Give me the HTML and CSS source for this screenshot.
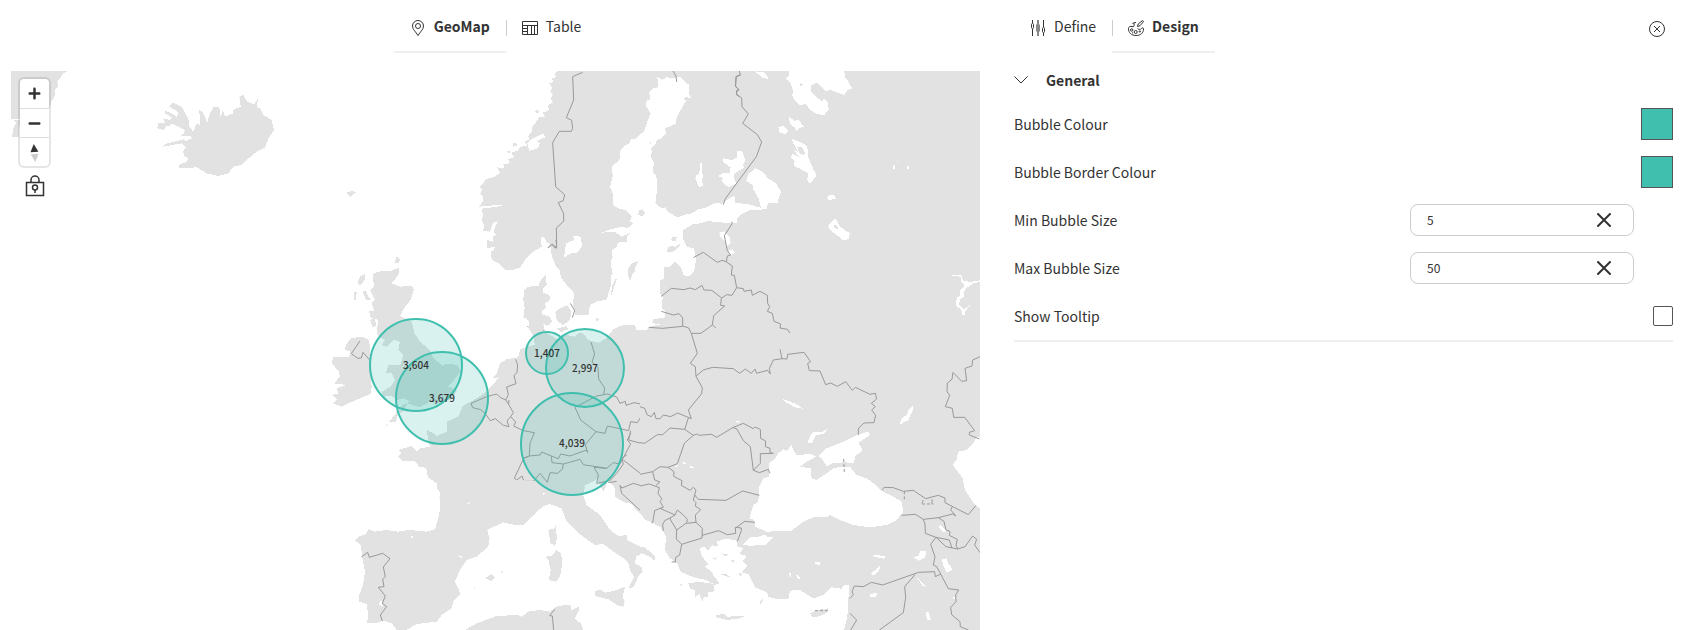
FILE: index.html
```html
<!DOCTYPE html>
<html lang="en">
<head>
<meta charset="utf-8">
<title>GeoMap design</title>
<link rel="stylesheet" href="styles.css">
</head>
<body>
<div class="app">
  <main class="view">
    <nav class="tabs tabs-center">
      <button class="tab active" type="button">
        <svg class="icon" viewBox="0 0 16 16"><path d="M8 15.5C6 12 2.500 9.500 2.500 6a5.500 5.500 0 0 1 11 0c0 3.500-3.500 6-5.500 9.500z"/><circle cx="8" cy="6" r="2.500"/></svg>
        GeoMap</button>
      <button class="tab" type="button">
        <svg class="icon" viewBox="0 0 16 16"><path d="M.5 1.500h15v13H.5zM.5 5.500h15M5.500 5.500v9M9.500 5.500v9M12.500 5.500v9M.5 8.500h5M.5 11.500h5"/></svg>
        Table</button>
    </nav>
    <div class="map">
      <svg class="map-canvas" viewBox="11 71 969 559" preserveAspectRatio="xMinYMin slice" role="img" aria-label="Map of Europe with bubbles">
        <!-- Iceland and Greenland -->
        <g transform="translate(0 60) scale(.33333)">
          <path class="land" d="M537 325V315L560 305 565 295 555 290 548 275 558 262 545 250 490 260 495 252 550 238 557 243 575 236 573 228 540 228 550 222 555 210 535 200 515 190 510 198 500 198 490 210 472 205 475 190 495 190 490 175 510 180 515 172 495 160 495 152 515 160 530 170 535 160 525 150 508 140 520 128 545 140 555 160 565 175 568 200 580 215 590 190 600 195 598 150 608 155 622 188 630 160 640 142 658 142 662 172 668 150 675 170 700 160 698 150 722 140 718 110 730 105 742 125 762 133 775 115 770 140 780 145 790 165 815 180 822 210 805 235 795 262 770 275 740 300 725 315 700 320 685 340 655 348 620 340 590 322Z"/>
          <path class="land" d="M33 33H205L190 40 182 52 172 66 174 78 164 92 166 105 154 125 150 142 60 178H33ZM60 180 56 230 36 232 40 205 48 188 40 180Z"/>
        </g>
        <!-- Scandinavia, the Baltics and Russia -->
        <g transform="translate(440 60) scale(.33333)">
          <path class="land" d="M352 33 344 42 348 52 336 56 340 66 328 70 336 84 330 95 338 104 332 118 340 128 322 135 328 150 308 158 314 170 298 172 285 190 278 200 275 215 265 228 268 238 255 245 262 258 240 260 235 272 214 278 222 292 204 298 210 310 190 312 192 325 172 322 180 338 165 350 140 357 120 380 126 390 120 402 130 412 128 425 118 440 186 434 186 438 127 446 128 470 124 480 132 495 130 512 150 515 158 490 175 482 165 500 162 515 168 525 158 530 158 545 142 540 140 565 165 560 160 572 153 574 155 600 180 612 195 630 218 630 240 622 255 600 280 575 305 560 303 535 312 530 318 545 330 552 336 590 348 620 360 630 362 650 378 672 400 695 403 712 398 725 405 765 445 765 450 735 470 725 500 718 512 680 512 650 518 640 512 610 518 590 515 570 530 562 534 548 560 545 560 530 572 518 545 530 525 515 485 518 510 508 530 504 545 500 562 505 580 490 570 484 575 470 555 450 535 445 518 435 518 400 510 380 518 350 516 320 538 300 542 270 550 260 570 248 572 238 590 235 602 222 612 215 620 190 632 160 618 138 620 122 630 118 628 95 640 85 655 82 652 52 668 60 680 52 702 55 720 50 732 62 748 75 746 102 755 115 735 110 732 118 738 122 725 145 710 172 708 190 690 200 675 205 678 220 665 235 650 240 648 252 632 265 636 275 632 290 642 310 638 335 646 345 652 362 650 398 646 430 665 445 678 442 680 452 695 462 712 472 735 464 755 460 775 448 800 442 828 428 845 432 860 420 883 407 886 428 930 434 978 448 930 450 905 462 893 472 890 490 850 488 800 483 785 490 760 492 730 510 728 535 740 560 762 565 768 600 762 635 745 650 730 645 722 620 705 605 690 620 672 620 672 655 660 662 660 700 668 712 665 745 675 752 675 772 640 778 636 790 668 792 630 800 620 810 590 812 585 795 550 794 520 808 500 835 560 1100H1620V33Z"/>
          <path class="land" d="M595 462 598 450 608 448 616 460 606 468 596 466ZM680 575 684 562 700 556 705 562 720 550 722 556 706 572 690 578ZM694 538 698 530 710 532 708 542 698 544ZM565 650 563 628 575 610 594 603 583 620 584 635 574 648 572 660ZM514 706 515 680 528 653 530 660 520 690ZM632 245 636 250 628 252ZM466 777 472 774 478 780 470 783ZM284 154 292 150 300 156 290 160ZM218 250 228 248 232 256 220 260ZM200 275 212 272 210 280ZM352 770 350 750 380 735 392 750 388 775 370 790ZM302 785 308 766 330 770 336 785 320 798ZM350 806 380 798 384 806 365 816Z"/>
          <path class="sea" d="M372 592 378 550 402 540 400 528 424 530 425 560 410 580 398 578ZM766 356 768 345 778 342 780 308 786 308 784 340 790 345 784 355 790 378 776 380ZM262 250 275 238 310 220 315 232 300 238 290 245 300 248 294 265 268 272Z"/>
          <path class="border" d="M428 37 398 50 401 120 379 173 395 181 398 205 394 214 358 214 338 248 347 380 374 404 370 422 355 428 371 461 371 484 349 504 350 564 337 552 325 564M699 33 708 48 710 66M900 45 888 50 887 80 897 90 890 95 890 105 900 110M391 730 404 752 397 773M262 799 271 808 314 811M664 709 694 685 732 689 750 684 766 689 786 676 792 690 815 691 845 714M760 593 790 577 832 607 846 601 858 605M664 754 700 765 717 761 728 774 728 799 668 805 626 802M453 847 459 870"/>
        </g>
        <!-- Lakes and borders of western Russia -->
        <g transform="translate(700 60) scale(.33333)">
          <path class="sea" d="M267 33H432L436 52 446 66 456 85 442 90 434 105 405 95 390 90 376 94 352 68 332 76 332 92 350 112 366 124 372 116 382 124 386 148 372 166 345 160 330 148 316 132 300 136 284 122 276 106 280 96 272 68 258 56 267 46ZM165 34 195 38 207 58 185 52ZM235 202 250 198 266 212 258 221 240 220ZM265 170 284 182 296 180 312 200 298 204 290 214 284 202 272 194ZM276 238 300 245 322 258 324 290 340 328 350 345 330 372 322 360 324 340 300 326 282 318 284 304 274 292 276 280 296 290 276 262 298 282 280 250ZM139 362 146 342 166 325 188 336 205 356 226 368 243 394 232 430 204 430 200 446 184 446 176 416 160 388 158 376ZM55 348 68 340 88 340 92 322 68 305 70 295 95 300 112 292 112 274 126 272 136 300 128 316 134 324 120 330 100 344 104 358 108 370 86 382 66 366 68 354ZM0 308 6 320 8 350 4 380 0 380ZM382 412 388 404 402 404 408 418 384 419ZM384 500 395 484 406 476 414 488 420 500 440 514 450 520 446 536 432 542 414 528 395 514ZM58 518 72 514 88 530 92 548 82 560 72 540 60 530ZM86 570 98 568 104 578 96 584 88 582ZM579 318 584 316 584 328 579 328ZM590 300 597 306 590 304ZM621 318 627 318 627 326 621 326ZM755 645 784 645 790 664 816 665 840 661V666L820 670 800 684 790 696 792 712 782 714 776 734 792 748 810 735 796 754 794 766 786 764 784 748 768 738 770 714 780 708 780 692 794 678 784 664 782 650 755 648Z"/>
          <path class="land" d="M300 70 308 72 306 80 300 78ZM292 262 306 262 316 280 308 286 296 276ZM400 494 410 496 416 510 404 504Z"/>
          <path class="border" d="M118 33 121 46 109 49 106 78 117 89 109 92 110 104 125 114 126 140 145 162 128 190 172 224 185 246 169 290 76 416 70 434M95 485 97 490 73 527 82 572 92 585 82 588 79 606 97 618 94 645 103 646 110 683 96 706 80 704 64 715M64 715 62 736 74 738 41 767 37 795 0 822M37 795 47 803M110 683 130 686 132 694 154 690 157 706 180 694 202 706 203 730 209 740 202 754 217 760 222 784 242 792 240 804 262 808 273 824 259 842 235 838 226 849 240 868"/>
        </g>
        <!-- British Isles, Denmark, the Low Countries, Germany and France -->
        <g transform="translate(320 240) scale(.33333)">
          <path class="land" d="M880 270 860 295 835 308 805 300 790 280 775 278 765 290 740 285 715 300 690 285 670 275 672 260 664 240 668 225 665 212 678 204 675 190 690 180 688 165 668 158 670 145 680 135 678 105 665 115 655 138 625 140 612 150 610 180 614 205 610 230 628 245 625 262 640 290 645 315 620 320 600 328 595 352 560 358 540 370 530 400 518 415 538 412 520 432 500 455 470 475 428 498 415 530 380 545 382 575 350 588 340 580 320 570 325 600 330 620 300 625 290 635 275 618 235 630 245 640 234 650 245 662 285 664 298 680 318 684 324 712 350 730 352 745 372 775 358 770 362 800 355 835 345 868 500 870 700 780 790 765 790 740 830 718 840 735 850 755 865 720 885 745 885 770 910 786 935 792 950 812 1000 850H1100V270Z"/>
          <path class="land" d="M175 95 215 92 238 82 235 105 215 130 240 140 276 137 282 150 272 180 252 205 240 228 275 245 284 280 300 305 330 330 340 355 372 380 372 372 412 374 422 395 402 420 385 440 412 450 395 478 350 490 330 485 300 502 262 490 250 515 235 520 228 545 210 545 197 560 215 535 235 510 244 498 270 485 250 475 230 480 215 468 190 470 185 455 212 440 225 420 215 400 198 398 205 375 240 376 250 345 235 330 240 305 222 300 200 320 186 315 195 300 176 290 170 275 175 240 150 232 148 214 162 212 155 190 165 180 150 150 162 140 158 102ZM78 315 92 295 125 290 148 300 150 350 152 400 155 440 152 462 120 475 90 488 65 500 38 490 52 478 35 465 55 460 50 445 80 435 42 430 60 410 55 392 35 370 40 352 88 350 90 335 75 328ZM112 130 120 110 136 102 134 120 120 138ZM103 155 110 155 108 182 103 180ZM128 155 138 152 145 170 155 178 138 180ZM150 240 164 232 168 256 158 262ZM226 62 230 48 240 58 236 70 226 70ZM706 215 740 205 755 215 750 240 728 256 710 240ZM666 234 675 225 695 236 690 255 672 252ZM712 268 740 258 745 268 722 275ZM924 110 926 88 940 70 954 65 944 88 936 105 932 122Z"/>
          <path class="sea" d="M790 740 830 718 838 728 815 745 795 765ZM440 792 450 787 446 794Z"/>
          <path class="border" d="M120 303 94 341 113 355 124 354 129 337 150 361M684 23 695 12 706 25 710 15 708 0M813 306 824 342 816 366 834 382 836 417 854 444 851 463M587 358 593 375 591 398 582 406 588 431 560 441 565 464 557 480 566 493M453 490 500 470 530 462 540 472 557 480M453 490 458 503 482 509 495 520 511 542 526 536 550 556 567 560 561 543 572 530 580 518 566 493 567 480M572 530 587 546 581 558 610 572 643 578 630 610 628 648 611 655 583 715 590 720 606 708 612 724 640 724M611 655 628 648 660 645 665 636 694 648 715 656 722 642 750 648 800 630 803 638 796 614 828 575 782 540 765 502 830 468 862 462 890 471 900 490 916 484 918 496 942 488 972 494 990 520 1020 534M828 575 855 580 862 558 900 566 926 572 932 545 952 548 962 532 985 527M694 648 696 668 730 672 780 658 790 674 860 685 880 668 900 672 932 612 922 600 932 580M730 672 727 688 712 700 690 698 682 727 660 700 640 724M860 685 822 682 835 705 830 730 870 722 890 700 910 672 905 655 920 645M640 724 618 730 611 766 622 778 618 794 630 806 645 806 642 824M932 572 926 600 970 612 1020 583M910 660 966 704 1000 696 1020 680M890 724 865 728M900 736 906 744 940 730 960 736 1018 738M900 736 905 760 965 815 998 850M345 868 388 890 427 890 428 882 462 898 508 895"/>
        </g>
        <!-- Iberia, Italy and North Africa -->
        <g transform="translate(320 480) scale(.33333)">
          <path class="land" d="M345 148 320 155 290 152 265 150 235 155 200 150 165 155 145 148 138 163 115 170 106 182 122 195 128 240 135 275 130 310 118 345 116 365 140 372 144 400 142 428 165 430 190 422 215 430 230 450H260L290 432 350 425 365 405 395 385 400 365 422 342 405 305 420 270 440 240 470 230 505 200 508 175 502 150 530 122 560 130 590 136 610 135 640 105 670 78 690 72 725 85 740 125 770 155 800 178 825 195 850 192 880 215 910 235 925 250 930 270 942 290 925 325 940 322 955 290 968 275 965 262 945 250 948 230 965 220 985 222 1003 242 1005 228 985 212 940 190 922 180 922 165 895 168 870 150 840 105 800 75 790 45 795 20 600 0 360 0 360 80 355 140ZM685 150 705 145 712 170 705 198 692 190ZM706 135 708 150 705 150ZM675 230 695 228 710 210 724 222 726 255 720 290 708 305 686 300 692 270 686 242ZM824 335 840 328 855 338 885 332 915 320 908 350 914 365 910 380 895 378 865 358 825 348ZM496 294 514 282 524 292 514 304ZM540 276 546 273 552 280 544 280ZM435 450 470 430 530 408 595 405 605 410 625 395 660 390 690 395 712 378 750 374 755 390 778 380 775 395 764 415 782 430 790 450ZM458 328 466 322 462 328Z"/>
          <path class="sea" d="M272 168 280 166 276 178ZM414 226 426 230 424 234ZM440 70 450 66 448 72ZM176 374 184 360 188 378ZM668 40 674 40 672 46Z"/>
          <path class="border" d="M124 231 143 217 148 232 188 220 210 236 190 261 196 290 188 297 192 320 175 322 196 348 187 370 200 380 181 405 187 423M704 388 689 407 697 408 701 450"/>
        </g>
        <!-- Balkans, Black Sea, Turkey and the Caucasus -->
        <g transform="translate(640 300) scale(.33333)">
          <path class="land" d="M0 640 15 658 40 670 62 682 78 710 75 750 90 775 112 792 122 815 150 828 178 836 200 840 215 850 235 852 205 850 180 845 145 850 150 866 164 870 165 892 178 882 188 905 192 890 204 890 204 876 224 874 222 855 240 850 222 830 215 815 195 800 205 792 186 770 180 745 192 740 205 752 215 736 235 740 230 724 260 716 292 722 290 738 310 745 298 762 320 768 308 785 322 798 305 818 325 822 345 862 380 876 385 890 415 898 445 898 450 872 480 870 520 895 550 885 575 862 605 866 612 855 628 855 625 900 622 950 612 990H1020V625L1005 615 975 570 968 535 938 495 950 478 955 455 980 450 1000 430 1010 412 1020 410V100H0ZM228 945 255 942 260 950 314 948 300 955 262 960 230 953ZM510 940 530 930 565 925 560 938 530 952 515 950ZM0 740 15 742 45 768 44 780 20 765 0 758ZM358 905 372 895 362 912ZM218 775 230 772 228 780ZM240 822 260 822 272 832 262 830ZM245 760 268 764 255 768ZM272 780 285 782 280 790ZM295 815 300 820 310 822 300 828ZM120 850 128 856 124 860Z"/>
          <path class="sea" d="M415 460 430 448 440 452 455 435 460 450 470 465 515 462 528 470 500 485 480 500 512 505 515 535 530 540 560 520 580 505 600 500 630 500 650 525 680 535 700 550 725 572 760 590 785 605 790 635 770 660 740 675 690 682 640 675 600 660 570 645 560 652 520 652 490 665 455 692 380 695 345 680 343 660 328 655 340 615 355 605 358 560 370 535 388 530 388 490 405 475ZM535 468 560 445 610 425 650 405 685 395 690 405 655 428 668 450 645 470 642 490 615 490 580 488 560 498 545 475ZM308 735 330 712 350 712 375 703 385 712 400 712 378 735 330 737ZM430 298 470 312 489 326 465 322 435 306ZM502 430 512 405 520 395 545 396 560 388 555 400 528 406 515 430ZM778 376 786 354 800 345 806 330 820 316 818 332 804 362 790 366ZM895 680 902 676 918 690 912 697ZM288 362 302 362 292 370ZM905 778 920 775 926 792 938 808 920 818 912 802ZM690 822 704 812 720 796 718 812 704 826ZM820 772 835 768 842 752 860 752 855 772 835 782ZM524 785 540 786 542 796 526 792ZM696 764 736 768 732 776 702 770ZM688 870 692 882 712 878 708 890 692 892ZM465 820 482 834 474 838ZM446 820 455 818 452 832ZM830 832 858 860 848 858ZM856 938 866 936 872 960 862 960ZM130 485 140 490 130 492ZM150 498 166 502 152 504ZM104 498 114 496 110 502ZM938 890 946 892 942 902Z"/>
          <path class="land" d="M605 484 622 488 620 498 604 500ZM535 470 545 480 560 500 545 502Z"/>
          <path class="border" d="M154 100 172 160 151 190 166 200 168 229 187 263 185 281 145 330 154 356 113 339 92 350 70 345 60 356 48 356 43 337 34 350 22 345 14 325 0 320M184 100 154 100 146 84 128 78M168 229 190 210 218 202 280 206 299 220 316 207 334 220 345 207 350 220 382 211 391 222 388 206 400 180 426 176 441 177 443 163 492 157 512 185 503 190 508 212 540 213 557 254 572 249 592 259 617 245 637 271 646 262 690 283 706 280 710 297 694 310 706 320 695 330 707 346 702 368 672 369 655 385 655 405M420 148 426 176M145 354 134 388 90 384 68 404 52 404 14 430 0 428M134 388 160 406 133 430 112 491 84 502 60 500 38 515 0 523M160 406 170 402 178 406 215 403 230 412 278 383 310 370 340 386 345 381 361 388 362 415 377 423 376 440 390 445 390 458 400 460 361 461 361 490 340 511 331 440 310 422 290 386 278 383M340 511 358 518 385 508 390 520M84 502 102 515 101 529 126 542 124 556 150 571 160 562 168 570 164 585 175 598 258 601 308 573 358 586M164 585 160 600 168 608 166 618 182 629 166 645 168 667 138 670 110 690 92 660 90 654 105 645 60 625 70 622 60 604 66 598 54 580 58 563 28 552 0 558M60 625 44 632 38 668M90 654 74 662 68 675 70 692M110 690 109 717 125 733 186 714 187 685 168 667M105 645 112 630 130 645 142 658 140 668M38 515 44 540 60 546 48 556M125 733 119 765 107 772 106 786 95 786M186 706 236 692 262 704 287 700 286 682 304 684 304 692 292 724M287 684 314 664 345 667M727 570 732 562 760 563 790 574 820 571 857 596 895 586 915 594 915 608 985 644 1008 616M850 600 846 610M876 612 876 598M785 646 826 643 850 658 895 653 938 642 948 648 932 630 938 618M850 658 855 672 856 700 888 712 872 733 885 770 880 795 890 800 902 822 925 866 956 870 947 885 948 905 932 922 935 944 960 965 961 980 985 990M895 653 912 664 918 690 930 694 928 706 952 718 948 735 953 747 975 740 998 708 1010 718 1004 735 1020 758M888 712 918 740 953 747M888 712 928 720 936 745M1020 170 998 180 996 198 975 205 980 242 965 244 939 217 936 238 922 249 921 275 929 286 916 320 937 325 941 352 974 352 1004 392 988 397 988 405 1018 417M902 822 886 830 884 815 836 817 728 855 694 847 670 860 643 858 636 875 640 885 630 895M825 824 794 860 797 893 790 938 718 990M630 940 650 960 632 990"/>
          <path class="border dashed" d="M525 932H565M611 477 613 518M793 574V604M846 612H880"/>
        </g>
        <path class="land" d="M346 193l5-2 6 1-5 3-2 2z"/>
        <circle class="bubble" cx="416" cy="365" r="46"/>
        <circle class="bubble" cx="442" cy="398" r="46"/>
        <circle class="bubble" cx="585" cy="368" r="39"/>
        <circle class="bubble" cx="547" cy="353" r="21"/>
        <circle class="bubble" cx="572" cy="444" r="51"/>
        <g class="bubble-label">
          <text x="416" y="369">3,604</text>
          <text x="442" y="402">3,679</text>
          <text x="585" y="372">2,997</text>
          <text x="547" y="357">1,407</text>
          <text x="572" y="447">4,039</text>
        </g>
      </svg>
      <div class="map-tools">
        <div class="zoom-group">
          <button type="button" aria-label="Zoom in"><svg viewBox="0 0 29 29"><path d="M14.500 8.500c-.75 0-1.250.5-1.250 1.250v3.500h-3.500c-.75 0-1.250.5-1.250 1.250s.5 1.250 1.250 1.250h3.500v3.500c0 .75.5 1.250 1.250 1.250s1.250-.5 1.250-1.250v-3.500h3.500c.75 0 1.250-.5 1.250-1.250s-.5-1.250-1.250-1.250h-3.500v-3.500c0-.75-.5-1.250-1.250-1.250z"/></svg></button>
          <button type="button" aria-label="Zoom out"><svg viewBox="0 0 29 29"><path d="M9.750 13.250c-.75 0-1.250.5-1.250 1.250s.5 1.250 1.250 1.250h9.500c.75 0 1.250-.5 1.250-1.250s-.5-1.250-1.250-1.250z"/></svg></button>
          <button type="button" aria-label="Reset north"><svg viewBox="0 0 29 29"><g transform="rotate(-5 14.500 14.500)"><path d="M10.500 14l4-8 4 8z"/><path class="south" d="M10.500 16l4 8 4-8z"/></g></svg></button>
        </div>
        <button class="lock" type="button" aria-label="Lock map position"><svg viewBox="0 0 20 22"><path d="M1.500 7.500h17v13h-17zM6 7.500V5a4 4 0 0 1 8 0v2.500"/><circle cx="10" cy="12.500" r="2.500"/><path d="M10 15v3"/></svg></button>
      </div>
    </div>
  </main>

  <aside class="panel">
    <header class="panel-head">
      <nav class="tabs">
        <button class="tab" type="button">
          <svg class="icon" viewBox="0 0 16 16"><path d="M2.500 0v3M2.500 9v7M13.500 0v7M13.500 13v3"/><rect x="1.500" y="3.500" width="2" height="5" rx="1"/><rect x="12.500" y="7.500" width="2" height="5" rx="1"/><path class="mid" d="M8 0v16M7 5.500h2v5H7z"/></svg>
          Define</button>
        <button class="tab active" type="button">
          <svg class="icon" viewBox="0 0 16 16"><path d="M.5 8.500C.5 13 3.500 15.500 8 15.500s7.500-2.500 7.500-6.500c0-1.500-1.500-1.500-2-.5-1 1.500-3 1-4 0M.5 8.500c0-2 2-2.500 3.500-2 2 .7 2.500-.5 2-2.500C5.700 3 6.500 2.500 8 2.500M4.500 3.500 6.500 2.500M9.500 6.500l.7-2.500L14 .9c.8-.6 1.800.2 1.200 1.100L12 5.700z"/><circle cx="3.700" cy="10" r="1.200"/><circle cx="7.700" cy="12" r="1.500"/><circle cx="11.800" cy="11.500" r=".7"/><path d="M4 12.800h1"/></svg>
          Design</button>
      </nav>
      <button class="close" type="button" aria-label="Close"><svg class="icon" viewBox="0 0 16 16"><circle cx="8" cy="8" r="7.500"/><path d="M5 5l6 6M11 5l-6 6"/></svg></button>
    </header>
    <section class="section">
      <button class="section-title" type="button" aria-expanded="true"><svg viewBox="0 0 14 8"><path d="M.5.5 7 7l6.500-6.500"/></svg>General</button>
      <div class="row"><label for="fill">Bubble Colour</label><input class="swatch" id="fill" type="color" value="#40bfae"></div>
      <div class="row"><label for="stroke">Bubble Border Colour</label><input class="swatch" id="stroke" type="color" value="#40bfae"></div>
      <div class="row"><label for="min">Min Bubble Size</label>
        <div class="field"><input id="min" type="text" value="5"><button type="button" aria-label="Clear minimum"><svg viewBox="0 0 14 14"><path d="M1 1l12 12M13 1L1 13"/></svg></button></div></div>
      <div class="row"><label for="max">Max Bubble Size</label>
        <div class="field"><input id="max" type="text" value="50"><button type="button" aria-label="Clear maximum"><svg viewBox="0 0 14 14"><path d="M1 1l12 12M13 1L1 13"/></svg></button></div></div>
      <div class="row"><label for="tip">Show Tooltip</label><input class="check" id="tip" type="checkbox"></div>
    </section>
  </aside>
</div>
</body>
</html>
```
FILE: styles.css
```css
* {
  box-sizing: border-box;
}

body {
  margin: 0;
  background: #fff;
  color: #333;
  font-family: "Noto Sans CJK SC", "Noto Sans", sans-serif;
  font-size: 14px;
  line-height: 24px;
}

button,
input {
  margin: 0;
  padding: 0;
  border: 0;
  background: none;
  color: inherit;
  font: inherit;
}

svg {
  display: block;
}

.app {
  display: grid;
  grid-template-columns: minmax(0, 969fr) minmax(0, 659fr);
  column-gap: 34px;
  min-height: 100vh;
  padding: 0 20px 0 11px;
}

.view {
  display: flex;
  flex-direction: column;
  gap: 18px;
}

.tabs {
  display: flex;
  height: 53px;
}

.tabs-center {
  justify-content: center;
}

.tab {
  display: flex;
  gap: 8px;
  padding: 14px 16px 13px;
  border-bottom: 2px solid transparent;
  position: relative;
}

.tab .icon {
  margin-top: 6px;
}

.tab.active {
  border-bottom-color: #efefef;
  font-weight: 700;
}

.tab + .tab::before {
  content: "";
  position: absolute;
  left: 0;
  top: 20px;
  width: 1px;
  height: 16px;
  background: #ccc;
}

.icon {
  width: 16px;
  height: 16px;
  fill: none;
  stroke: #333;
}

.icon .mid {
  stroke: #888;
  stroke-width: 2;
}

.map {
  position: relative;
  flex: 1;
  min-height: 0;
}

.map-canvas {
  position: absolute;
  width: 100%;
  height: 100%;
}

.land {
  fill: #e2e2e2;
  shape-rendering: crispEdges;
}

.sea {
  fill: #fff;
  shape-rendering: crispEdges;
}

.border {
  fill: none;
  stroke: #999;
  stroke-width: 3;
}

.border.dashed {
  stroke-dasharray: 9 6;
}

.bubble {
  fill: #40bfae;
  fill-opacity: .2;
  stroke: #40bfae;
  stroke-width: 2;
}

.bubble-label {
  fill: #333;
  font-size: 10px;
  font-weight: 500;
  text-anchor: middle;
}

.map-tools {
  position: absolute;
  top: 8px;
  left: 9px;
  display: flex;
  flex-direction: column;
  align-items: center;
  gap: 9px;
}

.zoom-group {
  width: 29px;
  border-radius: 4px;
  background: #fff;
  box-shadow: 0 0 0 2px rgba(0, 0, 0, .1);
}

.zoom-group button {
  display: block;
  width: 29px;
  height: 29px;
  fill: #333;
}

.zoom-group button + button {
  border-top: 1px solid #ddd;
}

.zoom-group .south {
  fill: #ccc;
}

.lock svg {
  width: 20px;
  height: 22px;
  fill: none;
  stroke: #333;
  stroke-width: 1.5;
}

.panel-head {
  display: flex;
  justify-content: space-between;
}

.close {
  align-self: flex-start;
  margin: 21px 8px 0;
}

.section {
  padding-top: 7px;
  border-bottom: 2px solid #efefef;
}

.section-title {
  display: flex;
  align-items: center;
  gap: 18px;
  height: 40px;
  font-weight: 700;
}

.section-title svg {
  width: 14px;
  height: 8px;
  fill: none;
  stroke: #333;
}

.row {
  display: flex;
  align-items: center;
  justify-content: space-between;
  height: 48px;
}

.swatch {
  width: 32px;
  height: 32px;
  border: 1px solid #555;
}

.swatch::-webkit-color-swatch-wrapper {
  padding: 0;
}

.swatch::-webkit-color-swatch {
  border: 0;
}

.field {
  display: flex;
  align-items: center;
  width: 224px;
  height: 32px;
  margin-right: 39px;
  padding: 0 22px 0 16px;
  border: 1px solid #ccc;
  border-radius: 8px;
}

.field input {
  flex: 1;
  min-width: 0;
  font-size: 12px;
  line-height: 20px;
}

.field svg {
  width: 14px;
  height: 14px;
  fill: none;
  stroke: #333;
  stroke-width: 2;
  stroke-linecap: round;
}

.check {
  appearance: none;
  width: 20px;
  height: 20px;
  border: 1px solid #555;
  border-radius: 2px;
}

.check:checked {
  background: #40bfae;
}
```
